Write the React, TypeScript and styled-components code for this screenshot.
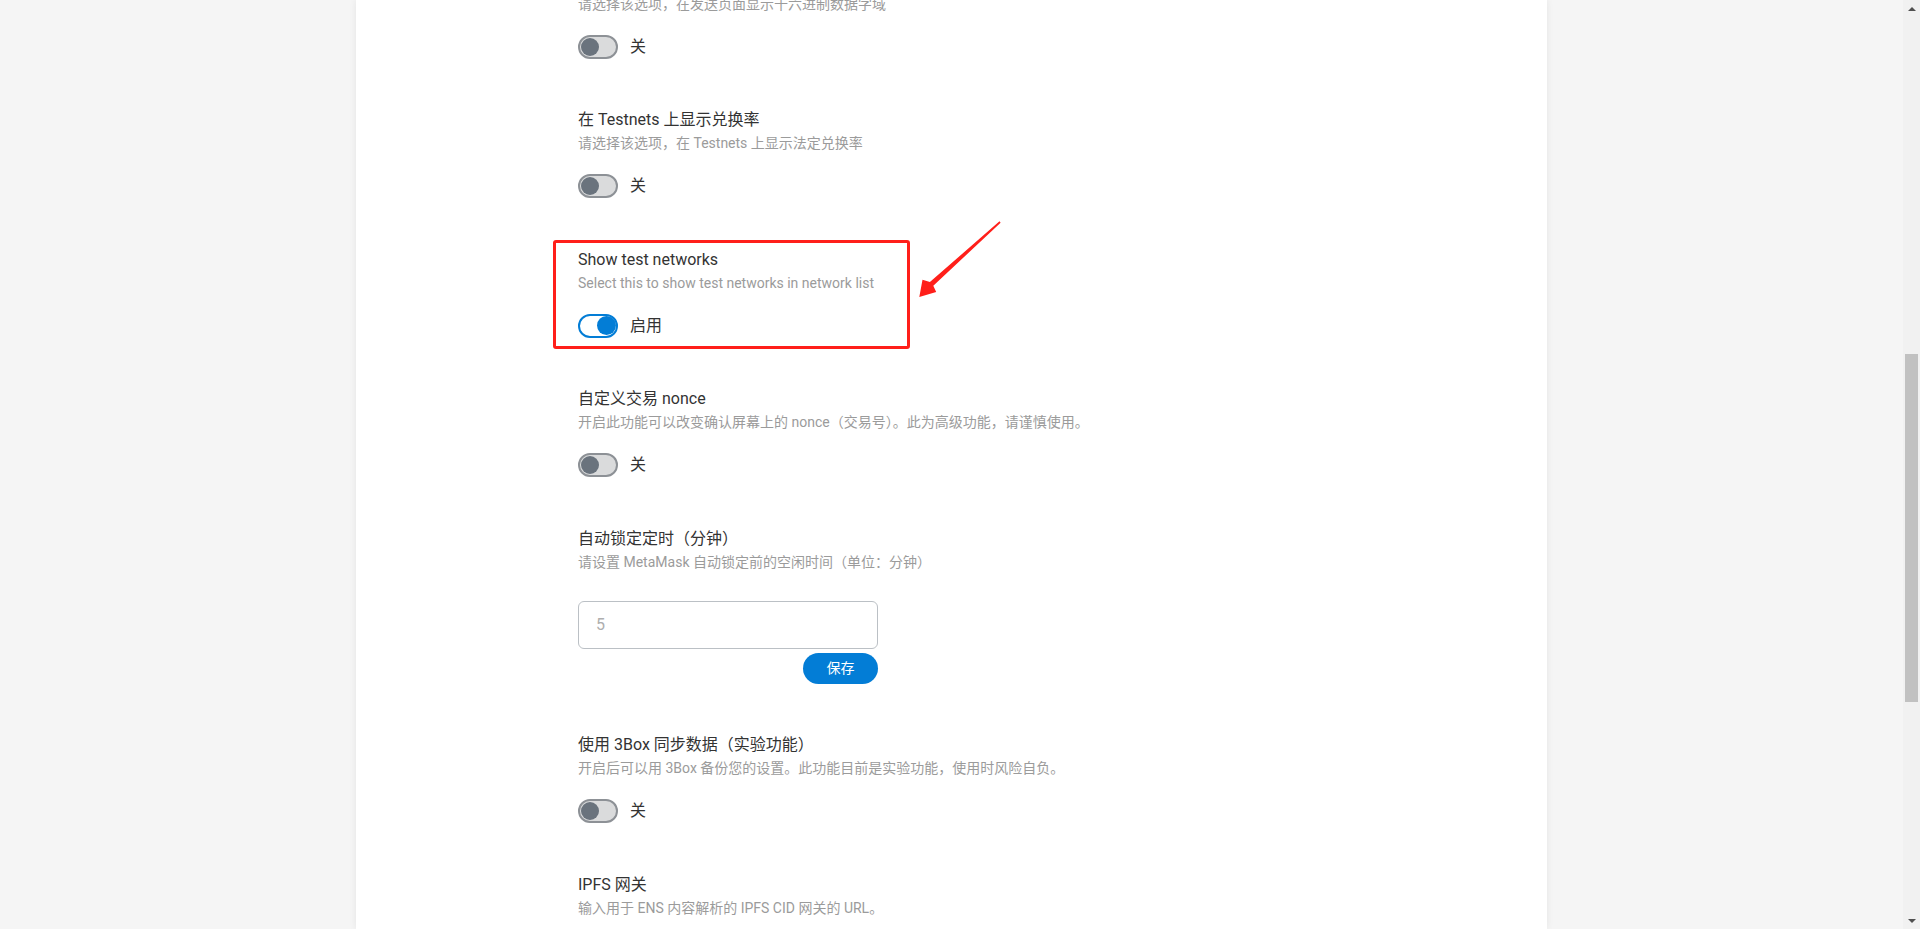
import React from "react";
import styled, { createGlobalStyle } from "styled-components";

const Global = createGlobalStyle`
  html, body { margin: 0; padding: 0; height: 100%; overflow: hidden; }
  body { font-family: Roboto, "Noto Sans CJK SC", sans-serif; }
  * { box-sizing: border-box; }
`;

const Shell = styled.div`
  display: flex;
  width: 100vw;
  height: 100vh;
  overflow: hidden;
`;

const Viewport = styled.div`
  flex: 1;
  min-width: 0;
  display: flex;
  justify-content: center;
  background: #f5f5f5;
  overflow: hidden;
`;

const Panel = styled.main`
  flex: none;
  width: 1191px;
  height: 100%;
  background: #ffffff;
  box-shadow: 0 0 7px rgba(0, 0, 0, 0.07);
  padding-left: 222px;
  overflow: hidden;
`;

const Content = styled.div`
  margin-top: -55.5px;
  display: flex;
  flex-direction: column;
`;

const Row = styled.section`
  position: relative;
  display: flex;
  flex-direction: column;
  align-items: flex-start;
  padding: 26px 0 25.5px;
`;

const Title = styled.div`
  font-size: 16px;
  line-height: 20px;
  color: #333333;
  white-space: nowrap;
`;

const Desc = styled.div`
  margin-top: 3px;
  font-size: 14px;
  line-height: 20px;
  color: #9b9b9b;
  white-space: nowrap;
`;

const ToggleRow = styled.div`
  margin-top: 21px;
  height: 24px;
  display: flex;
  align-items: center;
  gap: 12px;
`;

const Track = styled.div<{ $on: boolean }>`
  width: 40px;
  height: 24px;
  border-radius: 12px;
  border: 2px solid ${(p) => (p.$on ? "#037dd6" : "#8d9196")};
  background: ${(p) => (p.$on ? "#ffffff" : "#dadbdc")};
  display: flex;
  align-items: center;
  justify-content: ${(p) => (p.$on ? "flex-end" : "flex-start")};
  padding: 0 ${(p) => (p.$on ? "0.5px" : "1px")};
`;

const Knob = styled.span<{ $on: boolean }>`
  width: ${(p) => (p.$on ? 19 : 18)}px;
  height: ${(p) => (p.$on ? 19 : 18)}px;
  border-radius: 50%;
  background: ${(p) => (p.$on ? "#037dd6" : "#6a737d")};
`;

const ToggleLabel = styled.span`
  font-size: 16px;
  line-height: 20px;
  color: #333333;
`;

const InputGroup = styled.div`
  margin-top: 29px;
  width: 300px;
  display: flex;
  flex-direction: column;
`;

const NumberInput = styled.input`
  width: 300px;
  height: 48px;
  border: 1px solid #bbc0c5;
  border-radius: 6px;
  padding: 0 17px;
  font-family: Roboto, "Noto Sans CJK SC", sans-serif;
  font-size: 16px;
  color: #aeaeae;
  background: #ffffff;
  outline: none;
`;

const SaveButton = styled.button`
  align-self: flex-end;
  margin-top: 4px;
  width: 75px;
  height: 31px;
  border: none;
  border-radius: 100px;
  background: #037dd6;
  color: #ffffff;
  font-family: Roboto, "Noto Sans CJK SC", sans-serif;
  font-size: 14px;
  line-height: 31px;
  padding: 0;
`;

const HighlightBox = styled.div`
  position: absolute;
  left: -25px;
  top: 16px;
  width: 357px;
  height: 109px;
  border: 3px solid #ff1f1a;
  border-radius: 3px;
  pointer-events: none;
`;

const ArrowMark = styled.svg`
  position: absolute;
  left: 332px;
  top: -13px;
  width: 100px;
  height: 95px;
  pointer-events: none;
`;

const ScrollRail = styled.aside`
  flex: none;
  width: 17px;
  height: 100%;
  background: #f1f1f1;
  display: flex;
  flex-direction: column;
`;

const ScrollArrow = styled.div<{ $down?: boolean }>`
  height: 17px;
  display: flex;
  align-items: center;
  justify-content: center;
  &::before {
    content: "";
    width: 0;
    height: 0;
    border-left: 4px solid transparent;
    border-right: 4px solid transparent;
    ${(p) =>
      p.$down
        ? "border-top: 4px solid #505050;"
        : "border-bottom: 4px solid #505050;"}
  }
`;

const ScrollTrack = styled.div`
  flex: 1;
  display: flex;
  flex-direction: column;
`;

const ScrollThumb = styled.div`
  margin: 337px 2px 0;
  height: 348px;
  background: #c1c1c1;
`;

type ToggleSetting = {
  title: string;
  desc: string;
  on: boolean;
  highlight?: boolean;
};

const Toggle = ({ on }: { on: boolean }) => (
  <ToggleRow>
    <Track $on={on}>
      <Knob $on={on} />
    </Track>
    <ToggleLabel>{on ? "启用" : "关"}</ToggleLabel>
  </ToggleRow>
);

const ToggleRowSetting = ({ s }: { s: ToggleSetting }) => (
  <Row>
    <Title>{s.title}</Title>
    <Desc>{s.desc}</Desc>
    <Toggle on={s.on} />
    {s.highlight && (
      <>
        <HighlightBox />
        <ArrowMark viewBox="0 0 100 95">
          <polygon
            points="89.5,10.2 19.9,71.1 12.5,68.8 9.3,86 26.2,80.9 23.3,74.7 90.6,11.8"
            fill="#ff1f1a"
          />
        </ArrowMark>
      </>
    )}
  </Row>
);

const before: ToggleSetting[] = [
  {
    title: "显示十六进制数据",
    desc: "请选择该选项，在发送页面显示十六进制数据字域",
    on: false,
  },
  {
    title: "在 Testnets 上显示兑换率",
    desc: "请选择该选项，在 Testnets 上显示法定兑换率",
    on: false,
  },
  {
    title: "Show test networks",
    desc: "Select this to show test networks in network list",
    on: true,
    highlight: true,
  },
  {
    title: "自定义交易 nonce",
    desc: "开启此功能可以改变确认屏幕上的 nonce（交易号）。此为高级功能，请谨慎使用。",
    on: false,
  },
];

const after: ToggleSetting[] = [
  {
    title: "使用 3Box 同步数据（实验功能）",
    desc: "开启后可以用 3Box 备份您的设置。此功能目前是实验功能，使用时风险自负。",
    on: false,
  },
];

export default function App() {
  return (
    <>
      <Global />
      <Shell>
        <Viewport>
          <Panel>
            <Content>
              {before.map((s) => (
                <ToggleRowSetting key={s.title} s={s} />
              ))}
              <Row>
                <Title>自动锁定定时（分钟）</Title>
                <Desc>请设置 MetaMask 自动锁定前的空闲时间（单位：分钟）</Desc>
                <InputGroup>
                  <NumberInput defaultValue="5" readOnly />
                  <SaveButton>保存</SaveButton>
                </InputGroup>
              </Row>
              {after.map((s) => (
                <ToggleRowSetting key={s.title} s={s} />
              ))}
              <Row>
                <Title>IPFS 网关</Title>
                <Desc>输入用于 ENS 内容解析的 IPFS CID 网关的 URL。</Desc>
              </Row>
            </Content>
          </Panel>
        </Viewport>
        <ScrollRail>
          <ScrollArrow />
          <ScrollTrack>
            <ScrollThumb />
          </ScrollTrack>
          <ScrollArrow $down />
        </ScrollRail>
      </Shell>
    </>
  );
}
